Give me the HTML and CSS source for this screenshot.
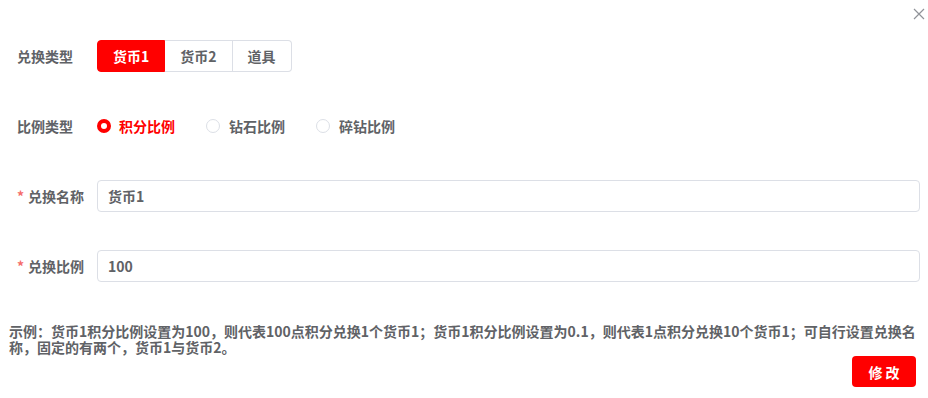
FILE: index.html
```html
<!DOCTYPE html>
<html lang="zh-CN">
<head>
    <meta charset="UTF-8">
    <meta name="viewport" content="width=device-width, initial-scale=1.0">
    <title>兑换设置</title>
    <link rel="stylesheet" href="styles.css">
</head>
<body>

    <div class="dialog">
        <header class="dialog-header">
            <button class="close-btn" aria-label="关闭">
                <svg width="12" height="12" viewBox="0 0 12 12">
                    <path d="M1 1 L11 11 M11 1 L1 11" stroke="#909399" stroke-width="1.2" fill="none"/>
                </svg>
            </button>
        </header>

        <form class="exchange-form">
            <div class="form-row">
                <label class="form-label">兑换类型</label>
                <div class="seg-group">
                    <button type="button" class="seg-btn active">货币1</button>
                    <button type="button" class="seg-btn">货币2</button>
                    <button type="button" class="seg-btn">道具</button>
                </div>
            </div>

            <div class="form-row">
                <label class="form-label">比例类型</label>
                <div class="radio-group">
                    <label class="radio checked"><span class="radio-dot"></span>积分比例</label>
                    <label class="radio"><span class="radio-dot"></span>钻石比例</label>
                    <label class="radio"><span class="radio-dot"></span>碎钻比例</label>
                </div>
            </div>

            <div class="form-row">
                <label class="form-label"><span class="req">*</span>兑换名称</label>
                <input type="text" class="text-input" value="货币1">
            </div>

            <div class="form-row">
                <label class="form-label"><span class="req">*</span>兑换比例</label>
                <input type="text" class="text-input" value="100">
            </div>
        </form>

        <p class="note">示例：货币1积分比例设置为100，则代表100点积分兑换1个货币1；货币1积分比例设置为0.1，则代表1点积分兑换10个货币1；可自行设置兑换名称，固定的有两个，货币1与货币2。</p>

        <div class="dialog-footer">
            <button type="button" class="submit-btn">修 改</button>
        </div>
    </div>

</body>
</html>
```

FILE: styles.css
```css
/* General Styles */
body {
    font-family: "Noto Sans CJK SC", "Noto Sans", sans-serif;
    background: #ffffff;
    margin: 0;
    padding: 0;
    color: #606266;
}

/* Dialog */
.dialog {
    width: 928px;
    height: 398px;
    box-sizing: border-box;
    padding: 0 8px 0 9px;
}

.dialog-header {
    height: 40px;
    display: flex;
    justify-content: flex-end;
    align-items: flex-start;
}

.close-btn {
    background: none;
    border: none;
    padding: 0;
    margin: 8px -5px 0 0;
    width: 12px;
    height: 12px;
    cursor: pointer;
    display: flex;
}

/* Form */
.exchange-form {
    padding-left: 8px;
    display: flex;
    flex-direction: column;
    gap: 38px;
}

.form-row {
    display: flex;
    align-items: center;
    height: 32px;
}

.form-label {
    width: 80px;
    flex-shrink: 0;
    font-size: 14px;
    font-weight: bold;
    color: #606266;
}

.req {
    color: #f56c6c;
    margin-right: 4px;
}

/* Segmented buttons */
.seg-group {
    display: flex;
}

.seg-btn {
    font-family: inherit;
    font-size: 14px;
    font-weight: bold;
    color: #606266;
    background: #ffffff;
    border: 1px solid #dcdfe6;
    border-left: none;
    height: 32px;
    padding: 0 15px;
    cursor: pointer;
}

.seg-btn:first-child {
    border-left: 1px solid #dcdfe6;
    border-radius: 4px 0 0 4px;
}

.seg-btn:last-child {
    border-radius: 0 4px 4px 0;
}

.seg-btn.active {
    background: #ff0000;
    border-color: #ff0000;
    color: #ffffff;
}

/* Radios */
.radio-group {
    display: flex;
    gap: 31px;
}

.radio {
    display: flex;
    align-items: center;
    gap: 8px;
    font-size: 14px;
    font-weight: bold;
    color: #606266;
    cursor: pointer;
}

.radio + .radio {
    gap: 9px;
}

.radio-dot {
    width: 14px;
    height: 14px;
    box-sizing: border-box;
    border: 1px solid #dcdfe6;
    border-radius: 50%;
    background: #ffffff;
}

.radio.checked {
    color: #ff0000;
}

.radio.checked .radio-dot {
    border: 4.5px solid #ff0000;
}

/* Inputs */
.text-input {
    flex: 1;
    height: 32px;
    box-sizing: border-box;
    border: 1px solid #dcdfe6;
    border-radius: 4px;
    padding: 0 10px;
    font-family: inherit;
    font-size: 14px;
    font-weight: bold;
    color: #606266;
    outline: none;
}

/* Note */
.note {
    margin: 41px 0 0 0;
    font-size: 14px;
    font-weight: bold;
    line-height: 16px;
    color: #606266;
}

/* Footer */
.dialog-footer {
    display: flex;
    justify-content: flex-end;
    padding-right: 4px;
    margin-top: 1px;
}

.submit-btn {
    font-family: inherit;
    font-size: 14px;
    font-weight: bold;
    color: #ffffff;
    background: #ff0000;
    border: none;
    border-radius: 4px;
    width: 64px;
    height: 31px;
    cursor: pointer;
}
```
